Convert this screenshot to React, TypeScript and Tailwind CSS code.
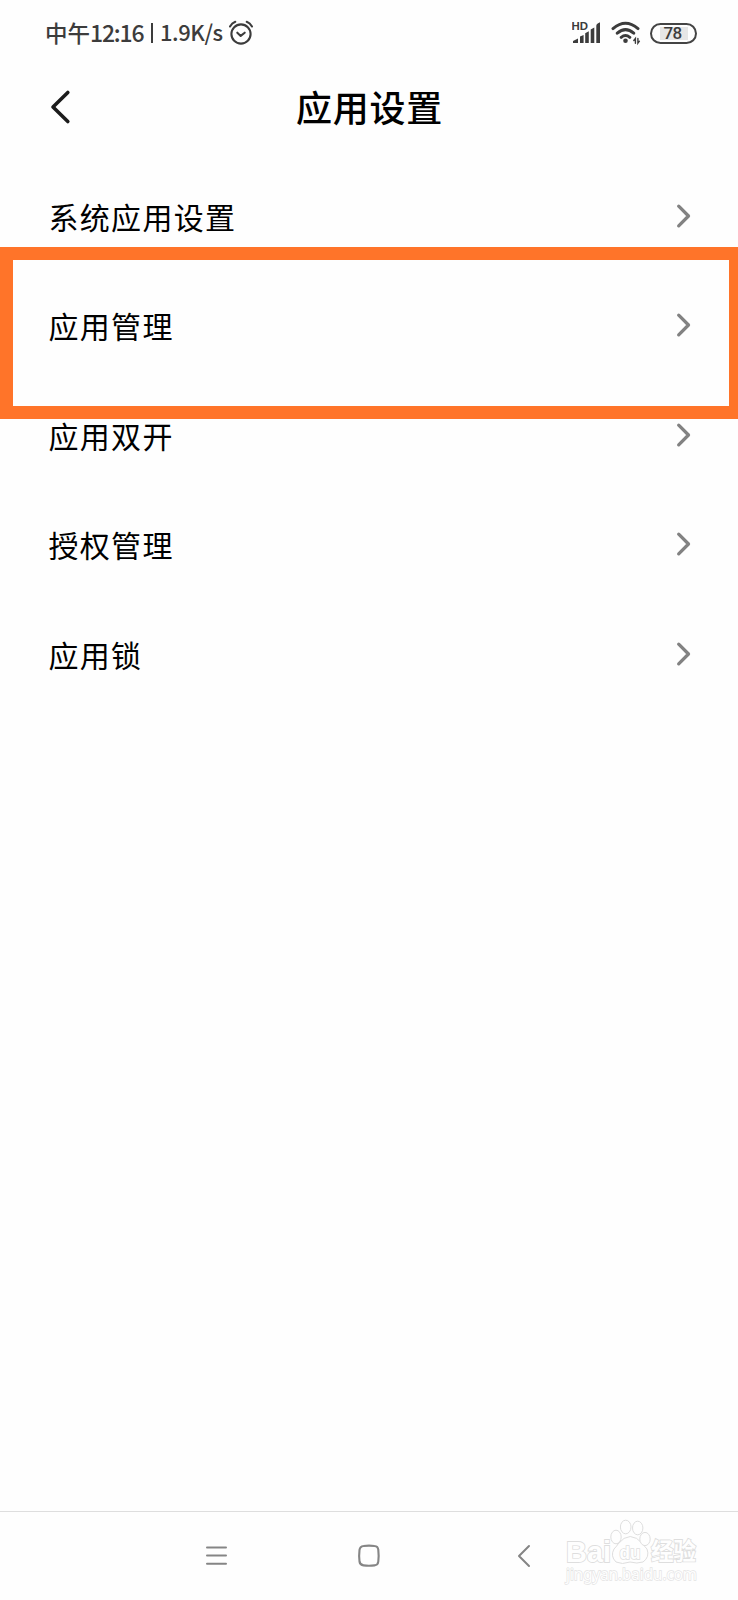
const rows = ['系统应用设置', '应用管理', '应用双开', '授权管理', '应用锁'];

function StatusBar() {
  return (
    <header className="flex h-[66px] items-center pl-[45px] pr-[41px] text-[#3c3c3c]">
      <div className="flex items-center whitespace-nowrap text-[22.5px] leading-none font-medium">
        <span className="-mt-[2px] w-[45px]">中午</span>
        <span className="-mt-[2px] w-[57px] tracking-[-1.2px] text-[23px]">12:16</span>
        <span className="ml-[4px] h-[20px] w-[2px] bg-[#3c3c3c]" />
        <span className="-mt-[4px] ml-[7px] w-[68px] tracking-[-0.45px] text-[22px]">1.9K/s</span>
      </div>
      <svg width="26" height="26" viewBox="0 0 26 26" fill="none" stroke="currentColor" strokeWidth="2.1" strokeLinecap="round" strokeLinejoin="round">
        <circle cx="13" cy="14" r="9.6" />
        <path d="M2 6.5Q4 3 7.3 1.8M24 6.5Q22 3 18.7 1.8M9.3 12.7L12.7 15.9L16.7 12.7" />
      </svg>
      <svg className="ml-auto" width="30" height="24" viewBox="0 0 30 24" fill="currentColor">
        <text x="-0.5" y="9" fontSize="10.8" fontWeight="700" textLength="16.5" lengthAdjust="spacingAndGlyphs" fontFamily="Liberation Sans, sans-serif">HD</text>
        <path d="M1 22v-2l5-2.4V22zM8 15.5l3.6-1.6V22H8zM13.2 12.2l3.6-2V22h-3.6zM18.7 8.4l3.6-2V22h-3.6zM24.3 4.7q0-1.5 1.4-2.2l2.3-1.2V22h-3.7z" />
      </svg>
      <svg className="ml-[8px]" width="32" height="26" viewBox="0 0 32 26" fill="none" stroke="currentColor" strokeWidth="3" strokeLinecap="round">
        <path d="M3 8.6Q15.5-2 28 8.6M7.3 13.2Q15.5 6 23.7 13.2M11.2 17.3Q15.5 13.7 19.8 17.3" />
        <circle cx="15.5" cy="20.8" r="2.3" fill="currentColor" stroke="none" />
        <path d="M25.4 23.2v-4.7l-1.6 2M27.9 18.4v4.8l1.5-2" strokeWidth="1.4" />
      </svg>
      <div className="ml-[8px] flex h-[21px] w-[47px] items-center justify-center rounded-full border-2 border-[#444] text-[17px] leading-none font-medium">
        <span className="flex h-[13px] w-[28px] items-center justify-center bg-[#e6e6e6] pr-[2px] font-[Roboto] tracking-[-0.7px]">78</span>
      </div>
    </header>
  );
}

function Chevron() {
  return (
    <svg width="16" height="28" viewBox="0 0 16 28" fill="none" stroke="#828282" strokeWidth="3.3" strokeLinecap="round" strokeLinejoin="round">
      <path d="M3.7 4.2L13.5 14L3.7 23.8" />
    </svg>
  );
}

function Watermark() {
  return (
    <svg className="absolute top-[5px] left-[560px]" width="150" height="76" viewBox="0 0 150 76" fill="#fefefe" stroke="#dedede" strokeWidth="1">
      <text x="6" y="44.5" fontSize="29" fontWeight="700" fontFamily="Liberation Sans, sans-serif" textLength="45" lengthAdjust="spacingAndGlyphs" strokeWidth="1.8" paintOrder="stroke">Bai</text>
      <path d="M58 27Q70 12 83 27Q84 29 87 32Q90 40 83 45Q77 47 70 45Q62 48 56 45Q50 39 54 32Q57 29 58 27Z" />
      <ellipse cx="56" cy="20" rx="5.2" ry="6.8" />
      <ellipse cx="65.7" cy="10" rx="5.3" ry="6.8" />
      <ellipse cx="77.7" cy="11" rx="5.2" ry="6.8" />
      <ellipse cx="85" cy="22" rx="5.2" ry="6.6" />
      <text x="59.5" y="42" fontSize="19" fontWeight="700" fontFamily="Liberation Sans, sans-serif" textLength="21" lengthAdjust="spacingAndGlyphs" strokeWidth="1.6" paintOrder="stroke">du</text>
      <text x="91" y="43" fontSize="23.5" fontWeight="700" fontFamily="'Noto Sans CJK SC', sans-serif" textLength="45" lengthAdjust="spacingAndGlyphs" strokeWidth="1.8" paintOrder="stroke">经验</text>
      <text x="6" y="62.5" fontSize="17" strokeWidth="1.4" paintOrder="stroke" stroke="#e3e3e3" fontFamily="'Noto Sans', sans-serif" textLength="131" lengthAdjust="spacingAndGlyphs">jingyan.baidu.com</text>
    </svg>
  );
}

export default function App() {
  return (
    <div className="relative flex h-[1600px] w-[738px] flex-col overflow-hidden bg-[#fefefe] font-['Noto_Sans_CJK_SC',sans-serif] text-black">
      <StatusBar />
      <div className="grid h-[95px] grid-cols-[1fr_auto_1fr] items-start px-[49px] pt-[18px]">
        <svg className="mt-[5px]" width="24" height="36" viewBox="0 0 24 36" fill="none" stroke="#1c1c1c" strokeWidth="3.6" strokeLinecap="round" strokeLinejoin="round">
          <path d="M18.8 3.5L4 18L18.8 32.5" />
        </svg>
        <h1 className="pl-px text-[36px] leading-[44px] font-medium tracking-[0.7px]">应用设置</h1>
      </div>
      <main className="flex-1">
        {rows.map((label) => (
          <button key={label} className="flex h-[109.5px] w-full items-center justify-between pr-[47px] pl-[48.5px] text-left">
            <span className="text-[30px] leading-[40px] tracking-[1.3px]">{label}</span>
            <Chevron />
          </button>
        ))}
      </main>
      <div className="pointer-events-none absolute top-[247px] left-0 h-[172px] w-[738px] border-[13px] border-r-[9px] border-[#ff7429]" />
      <nav className="relative flex h-[89px] items-start border-t border-[#dedede] pt-[31px] pl-[205px]">
        <svg width="24" height="26" viewBox="0 0 24 26" stroke="#858585" strokeWidth="2" strokeLinecap="round">
          <path d="M2 4.5h19M2 12.5h19M2 20.8h19" />
        </svg>
        <svg className="ml-[127px]" width="26" height="26" viewBox="0 0 26 26" fill="none" stroke="#858585" strokeWidth="2.1">
          <path d="M7.5 3Q13 2.2 18.5 3Q22 3.2 22.3 7Q23 12.5 22.3 18.5Q22 22 18.5 22.4Q13 23 7.5 22.4Q4 22 3.5 18.5Q2.8 12.5 3.5 7Q4 3.3 7.5 3Z" />
        </svg>
        <svg className="ml-[134px]" width="18" height="26" viewBox="0 0 18 26" fill="none" stroke="#858585" strokeWidth="2" strokeLinecap="round" strokeLinejoin="round">
          <path d="M13 3L3 13L13 23" />
        </svg>
        <Watermark />
      </nav>
    </div>
  );
}
